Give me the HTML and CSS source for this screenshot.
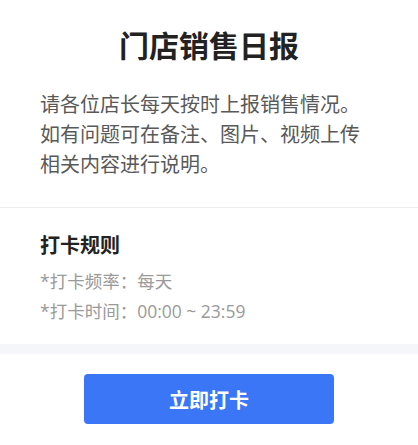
FILE: index.html
```html
<!DOCTYPE html>
<html lang="zh">
<head>
<meta charset="utf-8">
<link rel="stylesheet" href="styles.css">
</head>
<body>
<div class="page">
  <section class="intro">
    <h1 class="title">门店销售日报</h1>
    <p class="desc">请各位店长每天按时上报销售情况。如有问题可在备注、图片、视频上传相关内容进行说明。</p>
  </section>
  <section class="rules">
    <h2 class="rules-title">打卡规则</h2>
    <p class="rule">*打卡频率：每天</p>
    <p class="rule">*打卡时间：00:00 ~ 23:59</p>
  </section>
  <div class="band"></div>
  <div class="actions">
    <button class="btn">立即打卡</button>
  </div>
</div>
</body>
</html>
```

FILE: styles.css
```css
html, body {
  margin: 0;
  padding: 0;
  background: #ffffff;
}
body {
  font-family: "Open Sans", "Noto Sans CJK SC", "Noto Sans", sans-serif;
}
.page {
  width: 418px;
}
.intro {
  padding: 24px 40px 27px;
  border-bottom: 1px solid #eeeeee;
}
.title {
  margin: 0;
  text-align: center;
  font-size: 30px;
  line-height: 44px;
  font-weight: 700;
  color: #222222;
}
.desc {
  margin: 22px 0 0;
  font-size: 20px;
  line-height: 30px;
  color: #595959;
}
.rules {
  padding: 24px 40px 18px;
}
.rules-title {
  margin: 0 0 6px;
  font-size: 20px;
  line-height: 28px;
  font-weight: 700;
  color: #222222;
}
.rule {
  margin: 0;
  font-size: 17.5px;
  line-height: 30px;
  color: #9a9a9a;
}
.band {
  height: 10px;
  background: #f5f6f9;
}
.actions {
  display: flex;
  justify-content: center;
  padding: 20px 0 21px;
}
.btn {
  width: 250px;
  height: 50px;
  border: none;
  border-radius: 4px;
  background: #3b76f6;
  color: #ffffff;
  font-family: inherit;
  font-size: 20px;
  font-weight: 700;
  padding: 0;
}
```
